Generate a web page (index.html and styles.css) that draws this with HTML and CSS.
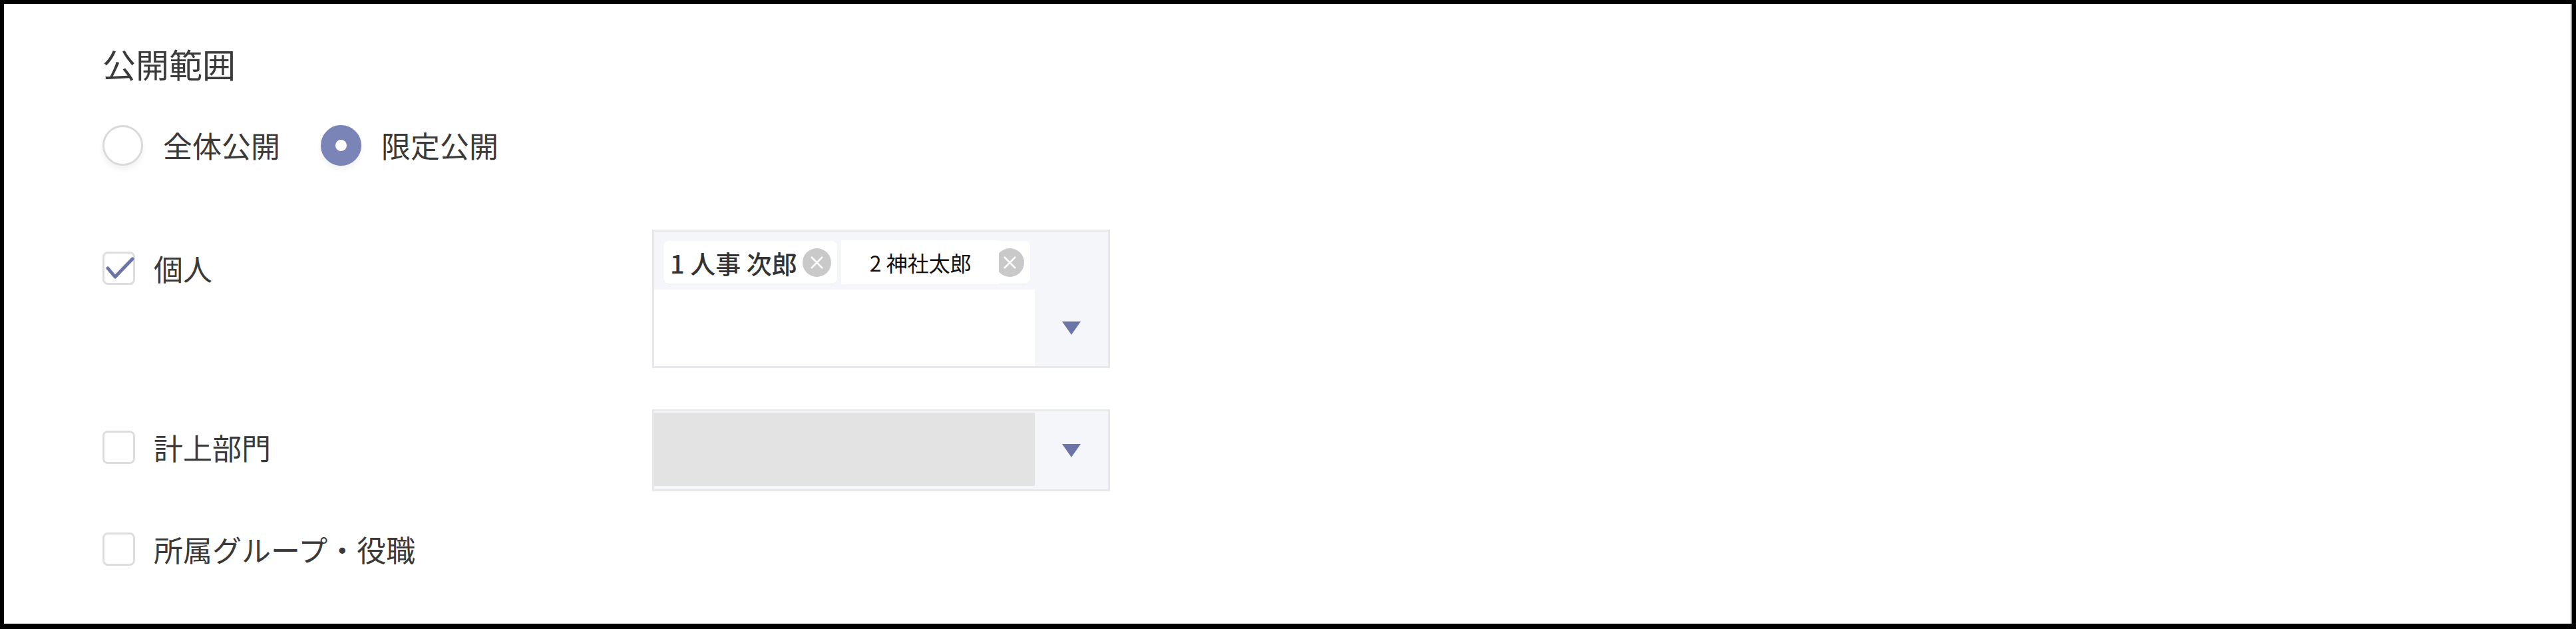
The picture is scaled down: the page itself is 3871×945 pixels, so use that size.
FILE: index.html
```html
<!DOCTYPE html>
<html lang="ja">
<head>
<meta charset="utf-8">
<title>公開範囲</title>
<link rel="stylesheet" href="styles.css">
</head>
<body>
<div class="frame">
  <div class="title">公開範囲</div>

  <div class="radios">
    <label class="radio-item">
      <span class="radio"></span>
      <span class="label-text">全体公開</span>
    </label>
    <label class="radio-item">
      <span class="radio radio-on"><span class="dot"></span></span>
      <span class="label-text">限定公開</span>
    </label>
  </div>

  <div class="row row-person">
    <div class="check-label">
      <span class="checkbox">
        <svg viewBox="0 0 48 48" width="48" height="48"><polyline points="8,25 19,38 45,11" fill="none" stroke="#6b75a6" stroke-width="5" stroke-linecap="round" stroke-linejoin="round"/></svg>
      </span>
      <span class="label-text">個人</span>
    </div>
    <div class="select select-multi">
      <div class="tags">
        <span class="tag">
          <span class="tag-text">1 人事 次郎</span>
          <svg class="xc" viewBox="0 0 43 43" width="43" height="43"><circle cx="21.5" cy="21.5" r="21.5" fill="#c9c9c9"/><path d="M13 13 L30 30 M30 13 L13 30" stroke="#fff" stroke-width="2.5"/></svg>
        </span>
        <span class="tag tag-two">
          <span class="patch">2 神社太郎</span>
          <span class="xc-clip"><svg class="xc" viewBox="0 0 43 43" width="43" height="43"><circle cx="21.5" cy="21.5" r="21.5" fill="#c9c9c9"/><path d="M13 13 L30 30 M30 13 L13 30" stroke="#fff" stroke-width="2.5"/></svg></span>
        </span>
      </div>
      <div class="input-area"></div>
      <div class="arrow-cell">
        <svg viewBox="0 0 28 20" width="28" height="20"><polygon points="0,0 28,0 14,20" fill="#6c74a8"/></svg>
      </div>
    </div>
  </div>

  <div class="row row-dept">
    <div class="check-label">
      <span class="checkbox"></span>
      <span class="label-text">計上部門</span>
    </div>
    <div class="select select-disabled">
      <div class="disabled-area"></div>
      <div class="arrow-cell">
        <svg viewBox="0 0 28 20" width="28" height="20"><polygon points="0,0 28,0 14,20" fill="#6c74a8"/></svg>
      </div>
    </div>
  </div>

  <div class="row row-group">
    <div class="check-label">
      <span class="checkbox"></span>
      <span class="label-text">所属グループ・役職</span>
    </div>
  </div>
</div>
</body>
</html>
```

FILE: styles.css
```css
html, body {
  margin: 0;
  padding: 0;
  background: #fff;
}

body {
  font-family: "Noto Sans CJK JP", "Noto Sans", sans-serif;
  color: #3a3a3a;
}

.frame {
  box-sizing: border-box;
  width: 3871px;
  height: 945px;
  border: 6px solid #000;
  border-bottom-width: 8px;
  padding: 59px 0 0 148px;
  box-shadow: inset -2px 0 0 #9a9a9a;
}

.title {
  font-size: 50px;
  line-height: 60px;
  height: 60px;
}

.radios {
  display: flex;
  align-items: center;
  height: 64px;
  margin-top: 61px;
}

.radio-item {
  display: flex;
  align-items: center;
  margin-right: 61px;
}

.radio {
  box-sizing: border-box;
  width: 61px;
  height: 61px;
  border-radius: 50%;
  border: 3px solid #dadada;
  background: #fff;
  box-shadow: 0 5px 9px rgba(0, 0, 0, 0.06);
  display: flex;
  align-items: center;
  justify-content: center;
}

.radio-on {
  background: #7a84b6;
  border-color: #7a84b6;
}

.dot {
  width: 17px;
  height: 17px;
  border-radius: 50%;
  background: #fff;
}

.label-text {
  font-size: 44px;
  line-height: 60px;
  margin-left: 30px;
  white-space: nowrap;
}

.check-label .label-text {
  margin-left: 28px;
}

.row {
  display: grid;
  grid-template-columns: 826px 688px;
  align-items: start;
}

.row-person {
  margin-top: 95px;
}

.row-person .check-label {
  padding-top: 28px;
}

.row-dept {
  margin-top: 62px;
}

.row-dept .check-label {
  padding-top: 27px;
}

.row-group {
  margin-top: 57px;
}

.check-label {
  display: flex;
  align-items: center;
}

.checkbox {
  box-sizing: border-box;
  width: 49px;
  height: 50px;
  border: 3px solid #dedede;
  border-radius: 8px;
  background: #fff;
  position: relative;
  flex: none;
}

.checkbox svg {
  position: absolute;
  left: -3px;
  top: -3px;
}

.select {
  box-sizing: border-box;
  border: 3px solid #e7e7ec;
  background: #f5f6fa;
  display: grid;
  grid-template-columns: 1fr 110px;
}

.select-multi {
  height: 208px;
  grid-template-rows: 87px 1fr;
}

.tags {
  grid-column: 1;
  grid-row: 1;
  display: flex;
  align-items: flex-start;
  padding: 14px 0 0 14px;
}

.tag {
  display: flex;
  align-items: center;
  height: 64px;
  background: #fff;
  border-radius: 8px;
  padding: 0 9px 0 10px;
  box-shadow: 0 1px 2px rgba(0, 0, 0, 0.03);
}

.tag-text {
  font-size: 38px;
  font-weight: 500;
  color: #333;
  white-space: nowrap;
  margin-right: 8px;
}

.xc {
  display: block;
  flex: none;
}

.tag-two {
  margin-left: 6px;
  padding-left: 0;
}

.patch {
  box-sizing: border-box;
  width: 237px;
  height: 66px;
  background: #fff;
  display: flex;
  align-items: center;
  padding-left: 43px;
  font-size: 32px;
  font-weight: 400;
  color: #111;
  white-space: nowrap;
}

.xc-clip {
  display: flex;
  justify-content: flex-end;
  width: 38px;
  overflow: hidden;
}

.input-area {
  grid-column: 1;
  grid-row: 2;
  background: #fff;
}

.arrow-cell {
  display: flex;
  align-items: center;
  justify-content: center;
}

.select-multi .arrow-cell {
  grid-column: 2;
  grid-row: 2;
}

.select-disabled {
  height: 123px;
}

.disabled-area {
  background: #e3e3e3;
  margin: 2px 0 5px;
}
```
